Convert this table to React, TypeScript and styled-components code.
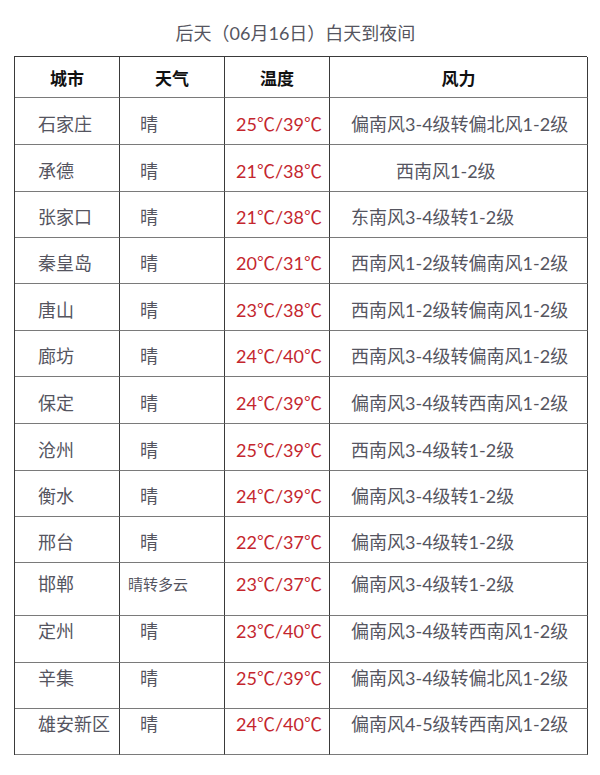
import React from "react";
import styled, { createGlobalStyle } from "styled-components";

const GlobalStyle = createGlobalStyle`
  body {
    margin: 0;
    background: #ffffff;
    font-family: Lato, "Noto Sans CJK SC", sans-serif;
  }
`;

const Page = styled.div`
  width: 600px;
  height: 775px;
  padding: 21px 13px 0 14px;
  box-sizing: border-box;
`;

const Title = styled.div`
  height: 24px;
  line-height: 24px;
  margin-bottom: 11px;
  text-align: center;
  font-size: 18px;
  color: #555560;
  padding-right: 10px;
`;

const Table = styled.div`
  display: grid;
  grid-template-columns: 105px 105px 105px 258px;
  border-left: 1px solid #3a3a3a;
  border-top: 1px solid #3a3a3a;
  width: 573px;
  box-sizing: border-box;
`;

const Cell = styled.div<{ $h: number; $top?: number; $pad?: number; $center?: boolean }>`
  height: ${(p) => p.$h}px;
  box-sizing: border-box;
  border-right: 1px solid #3a3a3a;
  border-bottom: 1px solid #7a7a7a;
  display: flex;
  align-items: ${(p) => (p.$top !== undefined ? "flex-start" : "center")};
  justify-content: ${(p) => (p.$center ? "center" : "flex-start")};
  padding-left: ${(p) => p.$pad ?? 0}px;
  padding-top: ${(p) => (p.$top !== undefined ? p.$top : 5)}px;
  font-size: 18px;
  line-height: 24px;
  color: #55555f;
  white-space: nowrap;
`;

const HeadCell = styled(Cell)`
  color: #111111;
  font-weight: 700;
  font-size: 17px;
  padding-top: 3px;
`;

const Temp = styled.span`
  color: #c4262e;
  padding-left: 4px;
`;

const Small = styled.span`
  font-size: 15px;
`;

type Row = {
  city: string;
  weather: string;
  temp: string;
  wind: string;
  h: number;
  top?: number;
  windPad?: number;
};

const rows: Row[] = [
  { city: "石家庄", weather: "晴", temp: "25℃/39℃", wind: "偏南风3-4级转偏北风1-2级", h: 47 },
  { city: "承德", weather: "晴", temp: "21℃/38℃", wind: "西南风1-2级", h: 47, windPad: 66 },
  { city: "张家口", weather: "晴", temp: "21℃/38℃", wind: "东南风3-4级转1-2级", h: 46 },
  { city: "秦皇岛", weather: "晴", temp: "20℃/31℃", wind: "西南风1-2级转偏南风1-2级", h: 46 },
  { city: "唐山", weather: "晴", temp: "23℃/38℃", wind: "西南风1-2级转偏南风1-2级", h: 47 },
  { city: "廊坊", weather: "晴", temp: "24℃/40℃", wind: "西南风3-4级转偏南风1-2级", h: 46 },
  { city: "保定", weather: "晴", temp: "24℃/39℃", wind: "偏南风3-4级转西南风1-2级", h: 47 },
  { city: "沧州", weather: "晴", temp: "25℃/39℃", wind: "西南风3-4级转1-2级", h: 47 },
  { city: "衡水", weather: "晴", temp: "24℃/39℃", wind: "偏南风3-4级转1-2级", h: 46 },
  { city: "邢台", weather: "晴", temp: "22℃/37℃", wind: "偏南风3-4级转1-2级", h: 46 },
  { city: "邯郸", weather: "晴转多云", temp: "23℃/37℃", wind: "偏南风3-4级转1-2级", h: 53, top: 9 },
  { city: "定州", weather: "晴", temp: "23℃/40℃", wind: "偏南风3-4级转西南风1-2级", h: 47, top: 3 },
  { city: "辛集", weather: "晴", temp: "25℃/39℃", wind: "偏南风3-4级转偏北风1-2级", h: 46, top: 3 },
  { city: "雄安新区", weather: "晴", temp: "24℃/40℃", wind: "偏南风4-5级转西南风1-2级", h: 46, top: 3 },
];

export default function App() {
  return (
    <Page>
      <GlobalStyle />
      <Title>后天（06月16日）白天到夜间</Title>
      <Table>
        <HeadCell $h={41} $center>城市</HeadCell>
        <HeadCell $h={41} $center>天气</HeadCell>
        <HeadCell $h={41} $center>温度</HeadCell>
        <HeadCell $h={41} $center>风力</HeadCell>
        {rows.map((r) => (
          <React.Fragment key={r.city}>
            <Cell $h={r.h} $top={r.top} $pad={23}>
              {r.city}
            </Cell>
            <Cell $h={r.h} $top={r.top} $pad={r.weather.length > 1 ? 8 : 20}>
              {r.weather.length > 1 ? <Small>{r.weather}</Small> : r.weather}
            </Cell>
            <Cell $h={r.h} $top={r.top} $center>
              <Temp>{r.temp}</Temp>
            </Cell>
            <Cell $h={r.h} $top={r.top} $pad={r.windPad ?? 21}>
              {r.wind}
            </Cell>
          </React.Fragment>
        ))}
      </Table>
    </Page>
  );
}
